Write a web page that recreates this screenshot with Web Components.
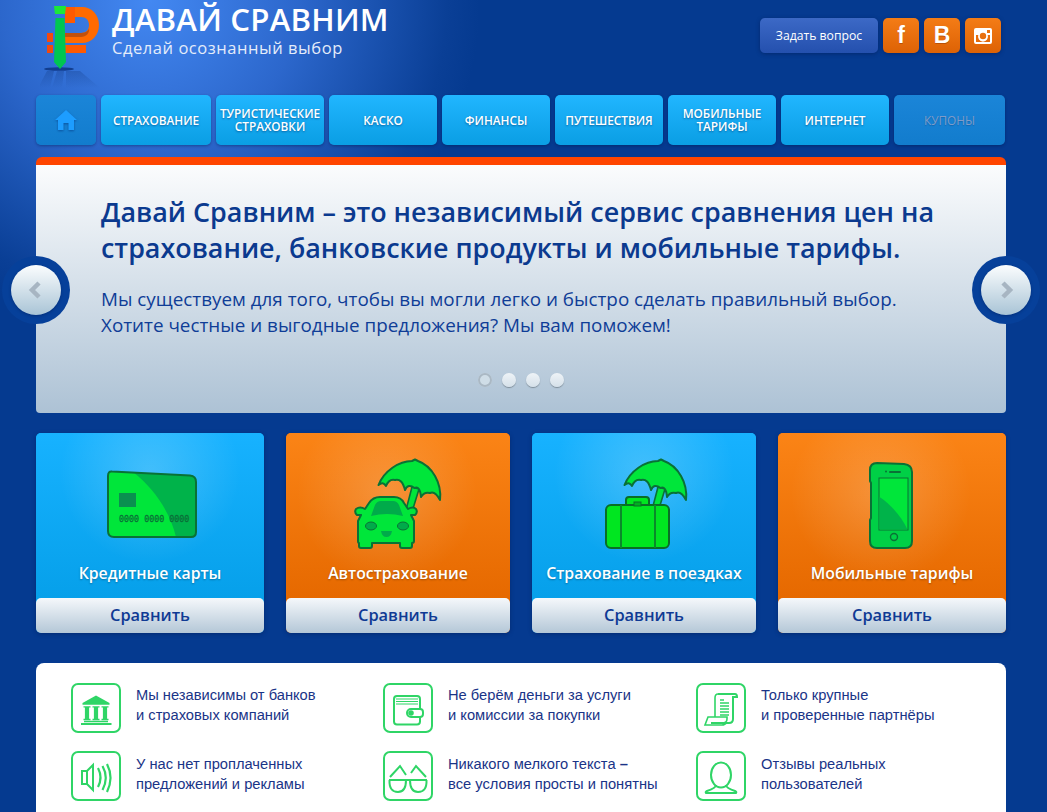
<!DOCTYPE html>
<html lang="ru">
<head>
<meta charset="utf-8">
<title>Давай Сравним</title>
<style>
  html, body { margin: 0; padding: 0; }
  body {
    background: radial-gradient(circle 330px at 150px 0, #4388f2 0, #2c67cc 45%, #0a3f96 90%, #053a90 100%) no-repeat #053a90;
    font-family: "Liberation Sans", Arial, sans-serif;
  }
  .page { width: 970px; padding-left: 36px; }
  .nav { display: grid; grid-template-columns: 60px 110px repeat(6, 108px) 111px; column-gap: 5px; margin-top: 0; }
  .offers { display: grid; grid-template-columns: 228px 224px 224px 228px; column-gap: 22px; margin-top: 20px; }
</style>
</head>
<body>
<div class="page">
  <dv-header></dv-header>
  <div class="nav">
    <dv-nav-item kind="muted"><svg width="22" height="20" viewBox="0 0 22 20"><path d="M11 0 L22 10 L19 10 L19 20 L13.500 20 L13.500 13 L8.500 13 L8.500 20 L3 20 L3 10 L0 10 Z" fill="#1d9dff"/></svg></dv-nav-item>
    <dv-nav-item>Страхование</dv-nav-item>
    <dv-nav-item>Туристические<br>страховки</dv-nav-item>
    <dv-nav-item>Каско</dv-nav-item>
    <dv-nav-item>Финансы</dv-nav-item>
    <dv-nav-item>Путешествия</dv-nav-item>
    <dv-nav-item>Мобильные<br>тарифы</dv-nav-item>
    <dv-nav-item>Интернет</dv-nav-item>
    <dv-nav-item kind="muted" dim>Купоны</dv-nav-item>
  </div>
  <dv-hero>
    <span slot="title">Давай Сравним – это независимый сервис сравнения цен на<br>страхование, банковские продукты и мобильные тарифы.</span>
    Мы существуем для того, чтобы вы могли легко и быстро сделать правильный выбор.<br>Хотите честные и выгодные предложения? Мы вам поможем!
  </dv-hero>
  <div class="offers">
    <dv-offer color="blue" icon="card">Кредитные карты</dv-offer>
    <dv-offer color="orange" icon="car">Автострахование</dv-offer>
    <dv-offer color="blue" icon="bag">Страхование в поездках</dv-offer>
    <dv-offer color="orange" icon="phone">Мобильные тарифы</dv-offer>
  </div>
  <dv-features>
    <dv-feature icon="bank">Мы независимы от банков<br>и страховых компаний</dv-feature>
    <dv-feature icon="wallet">Не берём деньги за услуги<br>и комиссии за покупки</dv-feature>
    <dv-feature icon="scroll">Только крупные<br>и проверенные партнёры</dv-feature>
    <dv-feature icon="speaker">У нас нет проплаченных<br>предложений и рекламы</dv-feature>
    <dv-feature icon="glasses">Никакого мелкого текста <b>–</b><br>все условия просты и понятны</dv-feature>
    <dv-feature icon="person">Отзывы реальных<br>пользователей</dv-feature>
  </dv-features>
</div>

<script>
const DISPLAY_FONT = '"Open Sans", "Noto Sans", sans-serif';

// Шапка: логотип и кнопки
class DvHeader extends HTMLElement {
  constructor() {
    super();
    const shadow = this.attachShadow({ mode: 'open' });
    shadow.innerHTML = `
      <style>
        :host { display: flex; justify-content: space-between; height: 95px; padding-right: 5px; }
        .brand { display: flex; align-items: flex-start; }
        .logo { margin-left: 4px; }
        .names { margin-left: 6px; color: #fff; font-family: ${DISPLAY_FONT}; }
        .name { font-size: 31.200px; line-height: 38px; font-weight: 600; letter-spacing: .2px; white-space: nowrap; }
        .tag { font-size: 16.500px; line-height: 20px; margin-top: 0; color: #e4ecfa; letter-spacing: .55px; white-space: nowrap; }
        .actions { display: flex; gap: 5px; padding-top: 18px; align-items: flex-start; }
        .ask, .soc { height: 35px; border-radius: 5px; color: #fff; display: flex; align-items: center; justify-content: center; box-shadow: 0 1px 4px rgba(0,20,70,.45); }
        .ask { width: 118px; background: linear-gradient(#3c69c6, #2450ae); font: 12.200px ${DISPLAY_FONT}; }
        .soc { width: 36px; background: linear-gradient(#f47c16, #dd6205); font: bold 23px "Liberation Sans", sans-serif; text-shadow: 0 1px 0 rgba(120,40,0,.4); }
      </style>
      <div class="brand">
        <svg class="logo" width="66" height="92" viewBox="0 0 66 92">
          <defs>
            <linearGradient id="fade" x1="0" y1="0" x2="0" y2="1"><stop offset="0" stop-color="#06235e" stop-opacity=".22"/><stop offset="1" stop-color="#06235e" stop-opacity="0"/></linearGradient>
          </defs>
          <path d="M7 71 H14 L10 88 H-2 Z M17 71 H24 L22 88 H12 Z M26 71 H40 L60 88 H26 Z" fill="url(#fade)"/>
          <ellipse cx="19" cy="69" rx="15" ry="1.800" fill="#062a70" opacity=".7"/>
          <path d="M7 33 H13 V42 H7 Z M7 45 H13 V53 H7 Z" fill="#f4490e"/>
          <path d="M25 7 H42 C52 7 59 15 59 25 C59 35 52 43 42 43 H25 V33 H41 C46 33 49 30 49 25 C49 20 46 17 41 17 H25 Z" fill="#ff6a00"/>
          <path d="M25 33 H41 C46 33 49 30 49 28 C50 33 46 37 41 37 H25 Z" fill="#b04a10" opacity=".8"/>
          <path d="M25 7 H35 V23 H25 Z M25 45 H46 V53 H25 Z" fill="#ff5a00"/>
          <path d="M14 6 H26 L25 14 H15 Z" fill="#1ce83a"/>
          <path d="M15.500 18 H24.500 L26 62 L20 69 L14 62 Z" fill="#00c650"/>
        </svg>
        <div class="names">
          <div class="name">ДАВАЙ СРАВНИМ</div>
          <div class="tag">Сделай осознанный выбор</div>
        </div>
      </div>
      <div class="actions">
        <div class="ask">Задать вопрос</div>
        <div class="soc">f</div>
        <div class="soc">В</div>
        <div class="soc">
          <svg width="18" height="16" viewBox="0 0 18 16"><path fill-rule="evenodd" fill="#fff" d="M2 0 H16 A2 2 0 0 1 18 2 V14 A2 2 0 0 1 16 16 H2 A2 2 0 0 1 0 14 V2 A2 2 0 0 1 2 0 Z M2 7 V13.500 A.5 .5 0 0 0 2.500 14 H15.500 A.5 .5 0 0 0 16 13.500 V7 H13.700 A5 5 0 1 1 4.300 7 Z M9 4.800 A3.200 3.200 0 1 0 9 11.200 A3.200 3.200 0 1 0 9 4.800 Z M13 2 V5 H16 V2 Z"/></svg>
        </div>
      </div>
    `;
  }
}

class DvNavItem extends HTMLElement {
  constructor() {
    super();
    const shadow = this.attachShadow({ mode: 'open' });
    shadow.innerHTML = `
      <style>
        :host {
          display: flex; align-items: center; justify-content: center; height: 50px; box-sizing: border-box;
          border-radius: 5px; text-align: center; text-transform: uppercase;
          background: linear-gradient(#21b6ff, #0a9ee4);
          box-shadow: 0 1px 3px rgba(0,20,70,.4);
          color: #fff; font: 600 11.800px/13px ${DISPLAY_FONT};
          text-shadow: 0 1px 2px rgba(0,50,110,.55);
        }
        :host([kind="muted"]) { background: linear-gradient(#1b85d8, #127ccd); }
        :host([dim]) { color: #7f9cc8; text-shadow: 0 1px 1px rgba(0,50,110,.3); font-weight: 400; }
        ::slotted(svg) { display: block; filter: drop-shadow(0 1px 1px rgba(0,40,110,.5)); }
      </style>
      <slot></slot>
    `;
  }
}

class DvHero extends HTMLElement {
  constructor() {
    super();
    const shadow = this.attachShadow({ mode: 'open' });
    const knob = (side, d) => `
      <div class="ring ${side}"><div class="knob">
        <svg width="16" height="18" viewBox="0 0 16 18"><path d="${d}" fill="none" stroke="#a7b5c2" stroke-width="4.500"/></svg>
      </div></div>`;
    shadow.innerHTML = `
      <style>
        :host {
          display: block; position: relative; box-sizing: border-box; height: 256px; margin-top: 12px;
          border-top: 8px solid #ff4500; border-radius: 6px 6px 4px 4px;
          background: linear-gradient(#fbfcfd, #adc2d5);
          padding: 29px 65px 0;
          color: #0f3d97; font-family: ${DISPLAY_FONT};
        }
        h2 { margin: 0 0 20px; font-size: 26.900px; line-height: 36px; font-weight: 600; color: #0b3a8f; white-space: nowrap; }
        .text { font-size: 18.850px; line-height: 26px; white-space: nowrap; }
        .ring { position: absolute; top: 91px; width: 68px; height: 68px; border-radius: 50%; background: radial-gradient(circle, #06409a 70%, #053a90 100%); display: flex; align-items: center; justify-content: center; }
        .ring.left { left: -34px; }
        .ring.right { right: -34px; }
        .knob { width: 50px; height: 50px; border-radius: 50%; background: linear-gradient(#fbfdfe, #a9c4d6); display: flex; align-items: center; justify-content: center; box-shadow: 0 1px 3px rgba(0,20,70,.4); }
        .dots { position: absolute; top: 208px; left: 442px; display: flex; gap: 10px; }
        .dots i { width: 14px; height: 14px; border-radius: 50%; background: linear-gradient(#eef3f7, #d5e0e9); box-shadow: 0 1px 1px #7e8c98; }
        .dots i.on { background: #cfdde7; box-shadow: inset 0 0 0 2px #aab8c4; }
      </style>
      <h2><slot name="title"></slot></h2>
      <div class="text"><slot></slot></div>
      ${knob('left', 'M11 2 L4 9 L11 16')}
      ${knob('right', 'M5 2 L12 9 L5 16')}
      <div class="dots"><i class="on"></i><i></i><i></i><i></i></div>
    `;
  }
}

// Иконки карточек: координаты взяты от страницы, поэтому у каждой свой viewBox
const LINE = '#0a7136';
const umbrella = `
  <path d="M408 510 L414 487 L421 489 L414 512 Z" fill="#00e63a" stroke="${LINE}" stroke-width="1.600"/>
  <path d="M380.500 485 C386 471 401 461 414 461 L417 459.500 L420 461 C434 466 444 483 442 500 Q437 490.500 432 493 Q426 491.500 423 497 Q422 485.500 416.500 488 Q410 483 407 490 Q404 478 397 480 Q391 478.500 388 486 Q385 481 380.500 485 Z" fill="#00e63a" stroke="${LINE}" stroke-width="2" stroke-linejoin="round"/>`;

const OFFER_ICONS = {
  card: `<svg viewBox="100 455 100 100"><path d="M112 471.500 L190 475.500 Q196 476 196 482 L196 532 Q196 537 191 537 L114 537 Q108 537 108 531 L108 476 Q108 471 112 471.500 Z" fill="#00e63a"/>
    <path d="M134 472.800 L190 475.500 Q196 476 196 482 L196 532 Q196 537 191 537 L176 537 C170 512 155 490 134 472.800 Z" fill="#00b34a"/>
    <path d="M112 471.500 L190 475.500 Q196 476 196 482 L196 532 Q196 537 191 537 L114 537 Q108 537 108 531 L108 476 Q108 471 112 471.500 Z" fill="none" stroke="${LINE}" stroke-width="2"/>
    <rect x="119" y="493" width="17" height="14" fill="#0a9050"/>
    <text transform="translate(119 522) scale(.73 1)" font-family="Liberation Mono, monospace" font-size="11.500" fill="#0b6b38" stroke="#0b6b38" stroke-width=".3">0000 0000 0000</text></svg>`,
  car: `<svg viewBox="350 455 100 100">${umbrella}
    <path d="M360 541 V521 L363 515 H359 Q356 512 358 509 Q362 506 367 509 L371 503 Q375 497 382 497 H396 Q403 497 406 503 L410 509 Q415 506 418 509 Q420 512 417 515 H413 L416 521 V541 Q416 543 414 543 V546 Q414 548 412 548 H404 Q402 548 402 546 V543 H374 V546 Q374 548 372 548 H363 Q361 548 361 546 V543 Q360 543 360 541 Z" fill="#00e63a" stroke="${LINE}" stroke-width="2" stroke-linejoin="round"/>
    <path d="M373 516 L377 505 Q379 501 383 501 H395 Q399 501 401 505 L405 516 Q389 512 373 516 Z" fill="#00ab4a"/>
    <ellipse cx="373" cy="526" rx="5.500" ry="4" fill="#00ab4a" stroke="${LINE}" stroke-width="1"/>
    <ellipse cx="405" cy="526" rx="5.500" ry="4" fill="#00ab4a" stroke="${LINE}" stroke-width="1"/>
    <path d="M383 531 H394 Q393 537 388.500 537 Q384 537 383 531 Z" fill="#00ab4a"/></svg>`,
  bag: `<svg viewBox="595 455 100 100"><g transform="translate(245 0)">${umbrella}</g>
    <path d="M627 505 V500 Q627 497 630 497 H647 Q650 497 650 500 V505 Z" fill="#00e620" stroke="#0a6e26" stroke-width="2"/>
    <rect x="607" y="505" width="63" height="43" rx="5" fill="#00e620" stroke="#0a6e26" stroke-width="2"/>
    <path d="M622 505 V548 M656 505 V548" stroke="#0a8a2a" stroke-width="2"/>
    <rect x="635" y="502" width="7" height="4" fill="#00b020" stroke="#0a6e26"/></svg>`,
  phone: `<svg viewBox="845 455 100 100"><path d="M880 463 L907 464 Q915 465 915 472 V541 Q915 548 908 548 H880 Q873 548 873 541 V520 L874 518 V483 L873 481 V470 Q873 463 880 463 Z" fill="#00d046" stroke="${LINE}" stroke-width="2"/>
    <rect x="882" y="478" width="29" height="52" fill="#00e63a" stroke="${LINE}" stroke-width="1"/>
    <path d="M882.500 497 C895 505 905 518 910.500 529.500 H882.500 Z" fill="#00b34a"/>
    <path d="M893 472 H903" stroke="${LINE}" stroke-width="2" stroke-linecap="round"/>
    <circle cx="889" cy="471.500" r="1" fill="${LINE}"/>
    <circle cx="897" cy="537" r="3.500" fill="#00d046" stroke="${LINE}" stroke-width="1.400"/></svg>`
};

class DvOffer extends HTMLElement {
  constructor() {
    super();
    const shadow = this.attachShadow({ mode: 'open' });
    shadow.innerHTML = `
      <style>
        :host { display: block; border-radius: 5px; overflow: hidden; height: 200px; box-shadow: 0 1px 4px rgba(0,20,70,.4); }
        :host([color="blue"]) { background: #06a0ea; }
        :host([color="orange"]) { background: #e66900; }
        .top { height: 165px; box-sizing: border-box; padding-top: 22px; display: flex; flex-direction: column; align-items: center; }
        :host([color="blue"]) .top { background: radial-gradient(circle 90px at 50% 40px, rgba(255,255,255,.2), rgba(255,255,255,0)), linear-gradient(#17b2ff, #06a0ea); }
        :host([color="orange"]) .top { background: radial-gradient(circle 90px at 45% 60px, rgba(255,255,255,.18), rgba(255,255,255,0)), linear-gradient(#fb8416, #e66900); }
        svg { width: 100px; height: 100px; display: block; }
        .name { margin-top: 8px; color: #fff; font: 600 15.800px/20px ${DISPLAY_FONT}; white-space: nowrap; text-shadow: 0 1px 2px rgba(0,0,0,.3); }
        .btn { height: 35px; background: linear-gradient(#f5f8fb, #b4c7d7); border-radius: 5px 5px 0 0; color: #0f3a94; text-align: center; font: 600 16.400px/33px ${DISPLAY_FONT}; }
      </style>
      <div class="top">
        ${OFFER_ICONS[this.getAttribute('icon')]}
        <div class="name"><slot></slot></div>
      </div>
      <div class="btn">Сравнить</div>
    `;
  }
}

const FEATURE_ICONS = {
  bank: `<path d="M25 12.500 L38.500 20 V21.800 H11.500 V20 Z" fill="#2fd566" stroke="none"/>
    <path d="M16 24 V36 M25 24 V36 M34 24 V36" stroke-width="4.200"/>
    <path d="M12.500 23.800 H19.500 M21.500 23.800 H28.500 M30.500 23.800 H37.500 M12.500 36.500 H19.500 M21.500 36.500 H28.500 M30.500 36.500 H37.500" stroke-width="1.300"/>
    <path d="M13 38.500 H37" stroke-width="1.600"/><path d="M10 41 H40.500" stroke-width="2"/>`,
  wallet: `<rect x="11" y="13" width="26" height="28.500" rx="3"/>
    <path d="M13 16 H35 M13 18.500 H35 M13 21 H35" stroke-width="1.200"/>
    <path d="M37 26 H28 A4 4 0 0 0 28 34 H37 A3 3 0 0 0 40 31 V29 A3 3 0 0 0 37 26 Z" fill="#fff"/>
    <circle cx="28" cy="30" r="1.800" fill="#2fd566"/>`,
  scroll: `<path d="M22 11 H39 Q41 11 41 14 H37 L37 36 Q37 40 33 40 H15"/>
    <path d="M22 11 Q19 11 19 15 V34 M26 40 Q31 40 31 36 V34 H12 L9 42 H26 Q29 42 31 39" stroke-width="1.600"/>
    <path d="M24 17 H28 M24 20 H33 M24 23 H33 M24 26 H33 M24 29 H33 M24 32 H33" stroke-width="1.300"/>`,
  speaker: `<path d="M11 20 H16 L22 14 V39 L16 33 H11 Z M16 20 V33"/>
    <path d="M27 17 Q32 26.500 27 36 M31.500 15 Q38 26.500 31.500 39 M36 13 Q43 26.500 36 41" stroke-width="2.200"/>`,
  glasses: `<path d="M7 26 L17 15 L23 24 M28 22 L33 15 L43 26" stroke-width="2"/>
    <path d="M6 29 H44"/><path d="M6.500 29 Q6 41 15 41 Q23 41 23 29 M27 29 Q27 41 35 41 Q44 41 43.500 29"/>`,
  person: `<ellipse cx="25" cy="24" rx="10" ry="12.500"/>
    <path d="M20 34 Q20 37 11 40 Q9 41 10 42 H40 Q41 41 39 40 Q30 37 30 34"/>`
};

class DvFeatures extends HTMLElement {
  constructor() {
    super();
    const shadow = this.attachShadow({ mode: 'open' });
    shadow.innerHTML = `
      <style>
        :host {
          display: grid; grid-template-columns: 312px 313px 1fr; grid-auto-rows: 50px; row-gap: 18px; align-content: start;
          margin-top: 30px; box-sizing: border-box; height: 149px; padding: 20px 0 0 35px;
          background: #fff; border-radius: 8px 8px 0 0;
        }
      </style>
      <slot></slot>
    `;
  }
}

class DvFeature extends HTMLElement {
  constructor() {
    super();
    const shadow = this.attachShadow({ mode: 'open' });
    shadow.innerHTML = `
      <style>
        :host { display: flex; gap: 15px; height: 50px; color: #1a3487; font: 14.700px/20px "Liberation Sans", Arial, sans-serif; white-space: nowrap; }
        .box { flex: none; width: 50px; height: 50px; box-sizing: border-box; border: 2.500px solid #2fd566; border-radius: 7px; overflow: hidden; }
        svg { display: block; margin: -2.500px; width: 50px; height: 50px; fill: none; stroke: #2fd566; stroke-width: 2; }
        .text { padding-top: 2px; }
        :host(:nth-child(n+4)) .text { padding-top: 3px; }
      </style>
      <div class="box"><svg viewBox="0 0 50 50">${FEATURE_ICONS[this.getAttribute('icon')]}</svg></div>
      <div class="text"><slot></slot></div>
    `;
  }
}

customElements.define('dv-header', DvHeader);
customElements.define('dv-nav-item', DvNavItem);
customElements.define('dv-hero', DvHero);
customElements.define('dv-offer', DvOffer);
customElements.define('dv-features', DvFeatures);
customElements.define('dv-feature', DvFeature);
</script>
</body>
</html>
